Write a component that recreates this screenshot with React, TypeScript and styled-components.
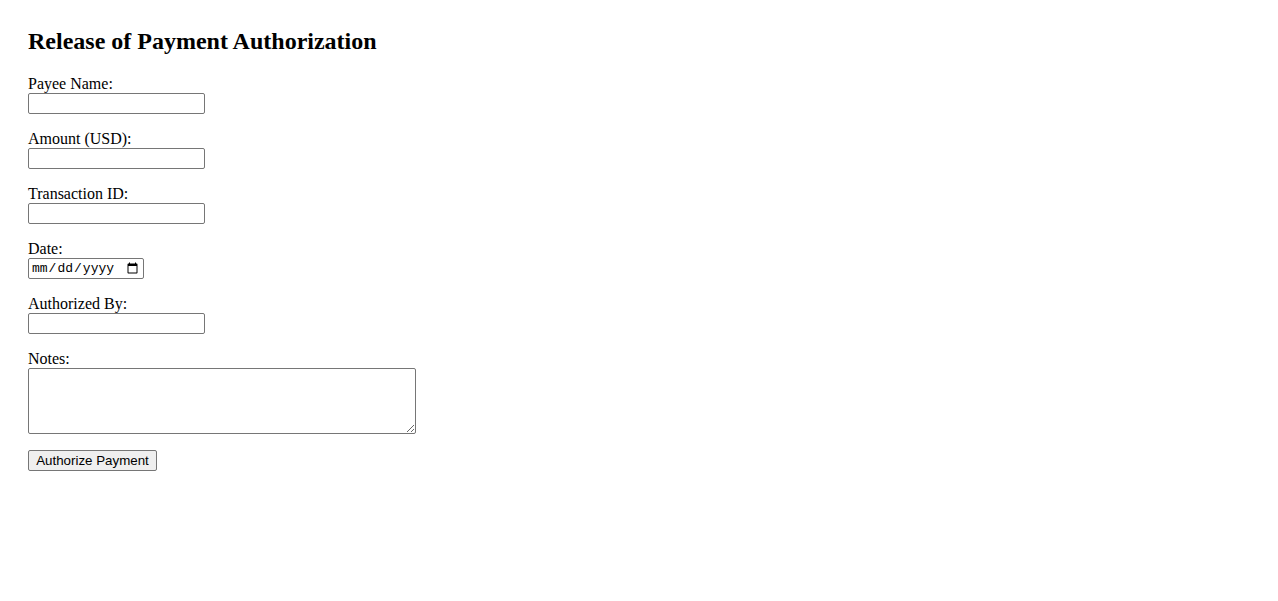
import React from "react";
import styled, { createGlobalStyle } from "styled-components";

const GlobalStyle = createGlobalStyle`
  html, body { background: #ffffff; }
  body {
    margin: 8px;
    font-family: "Liberation Serif", "Times New Roman", serif;
    font-size: 16px;
    color: #000000;
  }
`;

const Page = styled.div`
  padding: 20px;
`;

const Title = styled.h2`
  margin: 0 0 20px;
  font-size: 24px;
  font-weight: bold;
  line-height: 27px;
`;

const Form = styled.form`
  display: flex;
  flex-direction: column;
  align-items: flex-start;
`;

const Field = styled.div`
  display: flex;
  flex-direction: column;
  align-items: flex-start;
  margin-bottom: 16px;
`;

const Label = styled.label`
  display: block;
  line-height: 18px;
  height: 18px;
`;

const Input = styled.input<{ $w?: number }>`
  box-sizing: border-box;
  width: ${(p) => p.$w ?? 177}px;
  height: 21px;
  margin: 0;
  padding: 1px 2px;
  border: 1px solid #767676;
  border-radius: 2px;
  background: #ffffff;
  font-family: "Liberation Sans", Arial, sans-serif;
  font-size: 13.33px;
  color: #000000;
`;

const DateInput = styled(Input)`
  font-family: "Liberation Mono", "Courier New", monospace;
  font-size: 13px;
`;

const TextArea = styled.textarea`
  box-sizing: border-box;
  width: 388px;
  height: 66px;
  margin: 0;
  padding: 2px;
  border: 1px solid #767676;
  border-radius: 2px;
  font-family: "Liberation Mono", monospace;
  font-size: 13.33px;
`;

const Button = styled.button`
  box-sizing: border-box;
  height: 21px;
  width: 129px;
  margin: 0;
  padding: 1px 6px;
  border: 1px solid #767676;
  border-radius: 2px;
  background: #efefef;
  font-family: "Liberation Sans", Arial, sans-serif;
  font-size: 13.33px;
  color: #000000;
  line-height: 17px;
`;

const fields = [
  { id: "payee", label: "Payee Name:" },
  { id: "amount", label: "Amount (USD):" },
  { id: "txid", label: "Transaction ID:" },
];

export default function App() {
  return (
    <>
      <GlobalStyle />
      <Page>
        <Title>Release of Payment Authorization</Title>
        <Form onSubmit={(e) => e.preventDefault()}>
          {fields.map((f) => (
            <Field key={f.id}>
              <Label htmlFor={f.id}>{f.label}</Label>
              <Input id={f.id} type="text" />
            </Field>
          ))}
          <Field>
            <Label htmlFor="date">Date:</Label>
            <DateInput id="date" type="date" $w={116} />
          </Field>
          <Field>
            <Label htmlFor="auth">Authorized By:</Label>
            <Input id="auth" type="text" />
          </Field>
          <Field>
            <Label htmlFor="notes">Notes:</Label>
            <TextArea id="notes" />
          </Field>
          <Button type="submit">Authorize Payment</Button>
        </Form>
      </Page>
    </>
  );
}
